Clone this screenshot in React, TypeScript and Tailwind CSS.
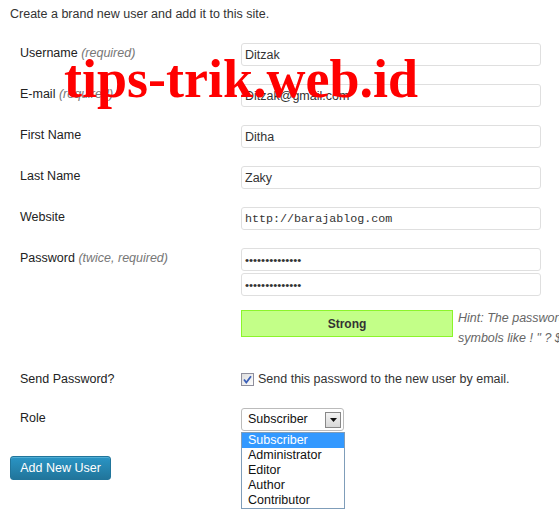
const roles = ["Subscriber", "Administrator", "Editor", "Author", "Contributor"];

const textFields = [
  { label: "Username", note: "(required)", value: "Ditzak" },
  { label: "E-mail", note: "(required)", value: "Ditzak@gmail.com" },
  { label: "First Name", value: "Ditha" },
  { label: "Last Name", value: "Zaky" },
  { label: "Website", value: "http://barajablog.com", mono: true },
];

function FieldLabel({ label, note }: { label: string; note?: string }) {
  return (
    <div className="w-[231px] shrink-0 pl-[10px] pt-[3px] leading-[15px] text-[#222]">
      {label}
      {note && <span className="italic text-[#777]"> {note}</span>}
    </div>
  );
}

function TextBox({ value, mono, type = "text" }: { value: string; mono?: boolean; type?: string }) {
  let font = "text-[12.5px]";
  if (mono) font = "font-['Liberation_Mono',monospace] text-[11.7px]";
  if (type === "password") font = "text-[11.5px]";
  return (
    <input
      readOnly
      type={type}
      value={value}
      className={
        "block h-[23px] w-[300px] rounded-[3px] border border-[#dfdfdf] bg-white px-[3px] text-[#333] outline-none " + font
      }
    />
  );
}

export default function App() {
  return (
    <div className="relative h-[523px] w-[559px] overflow-hidden bg-white pl-[10px] font-['Liberation_Sans',Arial,sans-serif] text-[12.5px] text-[#333]">
      <p className="pt-[7px] leading-[15px]">Create a brand new user and add it to this site.</p>

      <div className="mt-[21px]">
        {textFields.map((f) => (
          <div key={f.label} className="mb-[18px] flex">
            <FieldLabel label={f.label} note={f.note} />
            <TextBox value={f.value} mono={f.mono} />
          </div>
        ))}

        <div className="flex">
          <FieldLabel label="Password" note="(twice, required)" />
          <div>
            <TextBox type="password" value="ditzakpass1234" />
            <div className="mt-[2px]">
              <TextBox type="password" value="ditzakpass1234" />
            </div>
            <div className="mt-[14px] flex items-start">
              <div className="flex h-[27px] w-[212px] shrink-0 items-center justify-center border border-[#8cf52b] bg-[#c3ff88] text-[12px] font-bold text-[#333]">
                Strong
              </div>
              <div className="-mt-[2px] ml-[5px] whitespace-nowrap italic leading-[20px] text-[#666]">
                <div>Hint: The password should be at least seven characters long. To make it stronger, use upper and lower case letters, numbers and</div>
                <div>symbols like ! " ? $ % ^ &amp; ).</div>
              </div>
            </div>
          </div>
        </div>

        <div className="mt-[24px] flex">
          <div className="w-[231px] shrink-0 pl-[10px] leading-[15px] text-[#222]">Send Password?</div>
          <label className="flex items-center gap-[4px] leading-[15px] text-[#333]">
            <svg width="13" height="13" viewBox="0 0 13 13" className="shrink-0">
              <defs>
                <linearGradient id="cb" x1="0" y1="0" x2="1" y2="1">
                  <stop offset="0" stopColor="#dcdcdc" />
                  <stop offset="1" stopColor="#ffffff" />
                </linearGradient>
              </defs>
              <rect x="0.5" y="0.5" width="12" height="12" fill="url(#cb)" stroke="#8f8f9d" />
              <path d="M3 6.5 L5.3 9.5 L10 3.3" fill="none" stroke="#3a5fb8" strokeWidth="1.8" />
            </svg>
            Send this password to the new user by email.
          </label>
        </div>

        <div className="mt-[21px] flex">
          <div className="w-[231px] shrink-0 pl-[10px] pt-[3px] leading-[15px] text-[#222]">Role</div>
          <div className="relative">
            <div className="flex h-[23px] w-[103px] items-center justify-between rounded-[3px] border border-[#bbb] bg-white pl-[6px] pr-[2px] text-[#111]">
              <span>Subscriber</span>
              <span className="flex h-[16px] w-[16px] items-center justify-center border border-[#888] bg-gradient-to-b from-[#f4f4f4] to-[#d8d8d8]">
                <svg width="7" height="4" viewBox="0 0 7 4">
                  <path d="M0 0 H7 L3.5 4 Z" fill="#111" />
                </svg>
              </span>
            </div>
            <ul className="absolute left-0 top-[24px] z-10 w-[104px] border border-[#7f9db9] bg-white text-[#111]">
              {roles.map((r, i) => (
                <li
                  key={r}
                  className={"h-[15px] pl-[6px] leading-[15px] " + (i === 0 ? "bg-[#3399ff] text-white" : "")}
                >
                  {r}
                </li>
              ))}
            </ul>
          </div>
        </div>
      </div>

      <button className="mt-[25px] block h-[24px] w-[101px] rounded-[3px] border border-[#21759b] bg-gradient-to-b from-[#2a95c5] to-[#21759b] text-[12.5px] text-white shadow-[inset_0_1px_0_rgba(120,200,230,0.5)]">
        Add New User
      </button>

      <div className="pointer-events-none absolute left-[64px] top-[52px] font-['Liberation_Serif','Times_New_Roman',serif] text-[54px] font-bold leading-[54px] text-[#ff0000]">
        tips-trik.web.id
      </div>
    </div>
  );
}
